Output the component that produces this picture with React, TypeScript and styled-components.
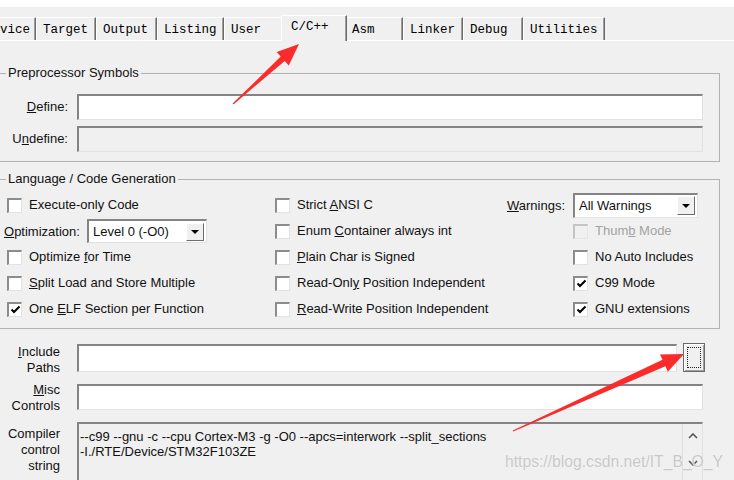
import React from "react";
import styled, { createGlobalStyle } from "styled-components";

const GlobalStyle = createGlobalStyle`
  html, body {
    margin: 0;
    padding: 0;
    background: #f0f0f0;
  }
  body {
    font-family: "Liberation Sans", Arial, sans-serif;
    font-size: 13px;
    color: #111;
  }
`;

const tabs = [
  { label: "Device", width: 58 },
  { label: "Target", width: 60 },
  { label: "Output", width: 61 },
  { label: "Listing", width: 67 },
  { label: "User", width: 59 },
  { label: "C/C++", width: 66, active: true },
  { label: "Asm", width: 58 },
  { label: "Linker", width: 60 },
  { label: "Debug", width: 60 },
  { label: "Utilities", width: 82 },
];

type Pt = [number, number];

// tapered screenshot-tool style arrow
function arrowPoints(tail: Pt, tip: Pt, headLen: number, headHalf: number, shaftHalf: number) {
  const dx = tip[0] - tail[0];
  const dy = tip[1] - tail[1];
  const len = Math.hypot(dx, dy);
  const ux = dx / len;
  const uy = dy / len;
  const nx = -uy;
  const ny = ux;
  const bx = tip[0] - ux * headLen;
  const by = tip[1] - uy * headLen;
  const pts: Pt[] = [
    [tail[0] + nx * 0.6, tail[1] + ny * 0.6],
    [bx + nx * shaftHalf, by + ny * shaftHalf],
    [bx + nx * headHalf, by + ny * headHalf],
    tip,
    [bx - nx * headHalf, by - ny * headHalf],
    [bx - nx * shaftHalf, by - ny * shaftHalf],
    [tail[0] - nx * 0.6, tail[1] - ny * 0.6],
  ];
  return pts.map((p) => p.map((v) => v.toFixed(1)).join(",")).join(" ");
}

function Option({
  checked,
  disabled,
  children,
}: {
  checked?: boolean;
  disabled?: boolean;
  children: React.ReactNode;
}) {
  return (
    <CheckItem $disabled={disabled}>
      <Box $disabled={disabled}>
        {checked && (
          <svg width="11" height="11" viewBox="0 0 11 11">
            <path d="M1.5 5.5 L4 8 L9.5 2.5" fill="none" stroke="#000" strokeWidth="2" />
          </svg>
        )}
      </Box>
      <span>{children}</span>
    </CheckItem>
  );
}

export default function App() {
  return (
    <>
      <GlobalStyle />
      <Root>
        <TopStrip />
        <TabBar>
          {tabs.map((t) => (
            <Tab key={t.label} $w={t.width} $active={t.active}>
              {t.label}
            </Tab>
          ))}
        </TabBar>

        <GroupBox $mt={24}>
          <Legend>Preprocessor Symbols</Legend>
          <SymbolsGrid>
            <FieldLabel>
              <U>D</U>efine:
            </FieldLabel>
            <TextBox $h={26} />
            <FieldLabel>
              U<U>n</U>define:
            </FieldLabel>
            <TextBox $h={26} $disabled />
          </SymbolsGrid>
        </GroupBox>

        <GroupBox $mt={9}>
          <Legend>Language / Code Generation</Legend>
          <LangGrid>
            <Option>Execute-only Code</Option>
            <SplitCell>
              <Option>
                Strict <U>A</U>NSI C
              </Option>
              <InlineLabel>
                <U>W</U>arnings:
              </InlineLabel>
            </SplitCell>
            <Select $w={125} $h={25}>
              <SelectText>All Warnings</SelectText>
              <DropButton>
                <Triangle />
              </DropButton>
            </Select>

            <Row>
              <OptLabel>
                <U>O</U>ptimization:
              </OptLabel>
              <Select $w={120} $h={24}>
                <SelectText>Level 0 (-O0)</SelectText>
                <DropButton>
                  <Triangle />
                </DropButton>
              </Select>
            </Row>
            <Option>
              Enum <U>C</U>ontainer always int
            </Option>
            <Option disabled>
              Thum<U>b</U> Mode
            </Option>

            <Option>
              Optimize <U>f</U>or Time
            </Option>
            <Option>
              <U>P</U>lain Char is Signed
            </Option>
            <Option>No Auto Includes</Option>

            <Option>
              <U>S</U>plit Load and Store Multiple
            </Option>
            <Option>
              Read-Onl<U>y</U> Position Independent
            </Option>
            <Option checked>C99 Mode</Option>

            <Option checked>
              One <U>E</U>LF Section per Function
            </Option>
            <Option>
              <U>R</U>ead-Write Position Independent
            </Option>
            <Option checked>GNU extensions</Option>
          </LangGrid>
        </GroupBox>

        <Lower>
          <LowerLabel $shift={1}>
            <U>I</U>nclude
            <br />
            Paths
          </LowerLabel>
          <Row>
            <TextBox $h={28} />
            <BrowseButton>
              <FocusRect />
            </BrowseButton>
          </Row>

          <LowerLabel $shift={-2}>
            <U>M</U>isc
            <br />
            Controls
          </LowerLabel>
          <TextBox $h={26} />

          <LowerLabel $shift={4}>
            Compiler
            <br />
            control
            <br />
            string
          </LowerLabel>
          <CommandBox>
            <CommandText>
              --c99 --gnu -c --cpu Cortex-M3 -g -O0 --apcs=interwork --split_sections
              <br />
              -I./RTE/Device/STM32F103ZE
            </CommandText>
            <ScrollBar>
              <svg width="10" height="6" viewBox="0 0 10 6">
                <path d="M1 5 L5 1 L9 5" fill="none" stroke="#555" strokeWidth="1.6" />
              </svg>
              <svg width="10" height="6" viewBox="0 0 10 6">
                <path d="M1 1 L5 5 L9 1" fill="none" stroke="#555" strokeWidth="1.6" />
              </svg>
            </ScrollBar>
          </CommandBox>
        </Lower>

        <Watermark>https://blog.csdn.net/IT_B_O_Y</Watermark>

        <Arrows width="734" height="480" viewBox="0 0 734 480">
          <polygon points={arrowPoints([233, 104], [299, 44], 22, 9, 3)} fill="#f92b2b" />
          <polygon points={arrowPoints([513, 431], [684, 354], 22, 9.5, 3.5)} fill="#f92b2b" />
        </Arrows>
      </Root>
    </>
  );
}

const Root = styled.div`
  position: relative;
  width: 734px;
  height: 480px;
  overflow: hidden;
  background: #f0f0f0;
`;

const TopStrip = styled.div`
  height: 7px;
  background: #fff;
`;

const TabBar = styled.div`
  display: flex;
  align-items: flex-end;
  height: 33px;
  margin-left: -22px;
  border-bottom: 1px solid #fff;
`;

const Tab = styled.div<{ $w: number; $active?: boolean }>`
  box-sizing: border-box;
  flex: none;
  width: ${(p) => p.$w}px;
  height: ${(p) => (p.$active ? 26 : 23)}px;
  margin: ${(p) => (p.$active ? "0 -2px -1px -2px" : "0")};
  padding: ${(p) => (p.$active ? "3px 0 0 9px" : "4px 0 0 6px")};
  position: relative;
  z-index: ${(p) => (p.$active ? 1 : 0)};
  background: #f0f0f0;
  border-top: 1px solid #fff;
  border-left: 1px solid #fff;
  border-right: 1px solid #6a6a6a;
  box-shadow: inset -1px 0 0 #a0a0a0;
  font-family: "Liberation Mono", "DejaVu Sans Mono", monospace;
  font-size: 12.5px;
  line-height: 16px;
  color: #000;
  white-space: nowrap;
`;

const GroupBox = styled.fieldset<{ $mt: number }>`
  margin: ${(p) => p.$mt}px 14px 0 -3px;
  padding: 0;
  min-width: 0;
  border: 1px solid #b2b2b2;
`;

const Legend = styled.legend`
  margin-left: 8px;
  padding: 0 2px;
  font-size: 13px;
  line-height: 16px;
`;

const SymbolsGrid = styled.div`
  display: grid;
  grid-template-columns: 70px 1fr;
  column-gap: 9px;
  row-gap: 6px;
  align-items: center;
  padding: 13px 16px 9px 0;
`;

const FieldLabel = styled.label`
  text-align: right;
  white-space: nowrap;
  line-height: 16px;
`;

const U = styled.span`
  text-decoration: underline;
`;

const TextBox = styled.div<{ $h: number; $disabled?: boolean }>`
  box-sizing: border-box;
  flex: 1;
  height: ${(p) => p.$h}px;
  background: ${(p) => (p.$disabled ? "#f0f0f0" : "#fff")};
  border-style: solid;
  border-width: 2px 1px 1px 2px;
  border-color: #848484 #e2e2e2 #e2e2e2 #848484;
`;

const LangGrid = styled.div`
  display: grid;
  grid-template-columns: 268px 298px 1fr;
  grid-auto-rows: 26px;
  align-items: center;
  padding: 5px 16px 6px 9px;
`;

const Row = styled.div`
  display: flex;
  align-items: center;
  gap: 6px;
`;

const SplitCell = styled.div`
  display: flex;
  align-items: center;
  justify-content: space-between;
`;

const InlineLabel = styled.label`
  margin-right: 8px;
  white-space: nowrap;
`;

const OptLabel = styled.label`
  flex: none;
  width: 77px;
  margin-left: -3px;
  white-space: nowrap;
`;

const CheckItem = styled.label<{ $disabled?: boolean }>`
  display: flex;
  align-items: center;
  gap: 7px;
  white-space: nowrap;
  line-height: 16px;
  color: ${(p) => (p.$disabled ? "#a3a3a3" : "#111")};
`;

const Box = styled.span<{ $disabled?: boolean }>`
  box-sizing: border-box;
  flex: none;
  display: flex;
  align-items: center;
  justify-content: center;
  width: 15px;
  height: 15px;
  background: ${(p) => (p.$disabled ? "#f0f0f0" : "#fff")};
  border-style: solid;
  border-width: 2px 1px 1px 2px;
  border-color: ${(p) =>
    p.$disabled ? "#c4c4c4 #e6e6e6 #e6e6e6 #c4c4c4" : "#8c8c8c #e2e2e2 #e2e2e2 #8c8c8c"};
`;

const Select = styled.div<{ $w: number; $h: number }>`
  box-sizing: border-box;
  flex: none;
  display: flex;
  align-items: center;
  width: ${(p) => p.$w}px;
  height: ${(p) => p.$h}px;
  padding: 0 2px 0 4px;
  background: #fff;
  border-style: solid;
  border-width: 2px 1px 1px 2px;
  border-color: #848484 #e2e2e2 #e2e2e2 #848484;
`;

const SelectText = styled.span`
  flex: 1;
  white-space: nowrap;
`;

const DropButton = styled.span`
  box-sizing: border-box;
  display: flex;
  align-items: center;
  justify-content: center;
  width: 18px;
  height: calc(100% - 3px);
  background: #f0f0f0;
  border: 1px solid;
  border-color: #fff #6d6d6d #6d6d6d #fff;
`;

const Triangle = styled.span`
  width: 0;
  height: 0;
  border-left: 4px solid transparent;
  border-right: 4px solid transparent;
  border-top: 4px solid #000;
`;

const Lower = styled.div`
  display: grid;
  grid-template-columns: 60px 1fr;
  grid-template-rows: 29px 26px 66px;
  column-gap: 17px;
  row-gap: 12px;
  align-items: start;
  padding: 14px 31px 0 0;
`;

const LowerLabel = styled.label<{ $shift: number }>`
  margin-top: ${(p) => p.$shift}px;
  text-align: right;
  line-height: 16px;
  white-space: nowrap;
`;

const BrowseButton = styled.div`
  box-sizing: border-box;
  flex: none;
  display: flex;
  width: 22px;
  height: 29px;
  margin-right: -2px;
  padding: 3px;
  background: #f0f0f0;
  border: 1px solid #6a6a6a;
  box-shadow: inset 1px 1px 0 #fff, inset -1px -1px 0 #a0a0a0;
`;

const FocusRect = styled.span`
  flex: 1;
  border: 1px dotted #222;
`;

const CommandBox = styled.div`
  box-sizing: border-box;
  display: flex;
  height: 66px;
  background: #f0f0f0;
  border-style: solid;
  border-width: 2px 1px 1px 2px;
  border-color: #848484 #e2e2e2 #e2e2e2 #848484;
`;

const CommandText = styled.div`
  flex: 1;
  padding: 5px 0 0 1px;
  line-height: 15px;
  white-space: nowrap;
`;

const ScrollBar = styled.div`
  box-sizing: border-box;
  flex: none;
  display: flex;
  flex-direction: column;
  align-items: center;
  gap: 21px;
  width: 20px;
  padding-top: 9px;
  border-left: 1px solid #dedede;
`;

const Watermark = styled.div`
  position: absolute;
  left: 505px;
  top: 452px;
  font-size: 15.7px;
  line-height: 20px;
  color: #c8c8c8;
  text-shadow: 0 0 1px #fff;
  white-space: nowrap;
  pointer-events: none;
`;

const Arrows = styled.svg`
  position: absolute;
  left: 0;
  top: 0;
  pointer-events: none;
`;
